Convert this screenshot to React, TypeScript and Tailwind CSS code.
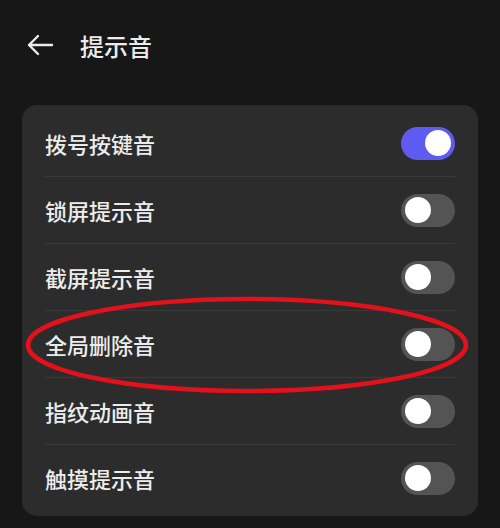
import React from "react";

const rows = [
  { label: "拨号按键音", on: true },
  { label: "锁屏提示音", on: false },
  { label: "截屏提示音", on: false },
  { label: "全局删除音", on: false },
  { label: "指纹动画音", on: false },
  { label: "触摸提示音", on: false },
];

function Toggle({ on }: { on: boolean }) {
  return (
    <div
      className={
        "flex h-[33px] w-[54px] items-center rounded-full px-[4px] " +
        (on ? "justify-end bg-[#5e5cf0]" : "justify-start bg-[#545454]")
      }
    >
      <div className="h-[26px] w-[26px] rounded-full bg-white" />
    </div>
  );
}

export default function App() {
  return (
    <div
      className="relative h-[528px] w-[500px] overflow-hidden bg-[#171717] text-[#ececec]"
      style={{ fontFamily: '"Noto Sans CJK SC", "Noto Sans", sans-serif' }}
    >
      <div className="flex h-[94px] items-center pl-[26px] pb-[2px]">
        <svg width="28" height="22" viewBox="0 0 28 22" fill="none" className="mb-[2px]">
          <path d="M26 11H3M12 2L3 11L12 20" stroke="#ececec" strokeWidth="2.4" strokeLinecap="round" strokeLinejoin="round" />
        </svg>
        <span className="ml-[26px] text-[24px] font-medium leading-none">提示音</span>
      </div>
      <div className="mx-[22px] mt-[11px] flex flex-col rounded-[15px] bg-[#2c2c2c] py-[5px]">
        {rows.map((r, i) => (
          <div key={r.label} className="mx-[23px]">
            <div className="flex h-[66px] items-center justify-between">
              <span className="text-[22px] font-medium leading-none">{r.label}</span>
              <Toggle on={r.on} />
            </div>
            {i < rows.length - 1 && <div className="h-px bg-[#3a3a3a]" />}
          </div>
        ))}
      </div>
      <svg className="pointer-events-none absolute left-0 top-0" width="500" height="528">
        <ellipse cx="247" cy="345" rx="219" ry="46" fill="none" stroke="#e3111b" strokeWidth="4.5" />
      </svg>
    </div>
  );
}
